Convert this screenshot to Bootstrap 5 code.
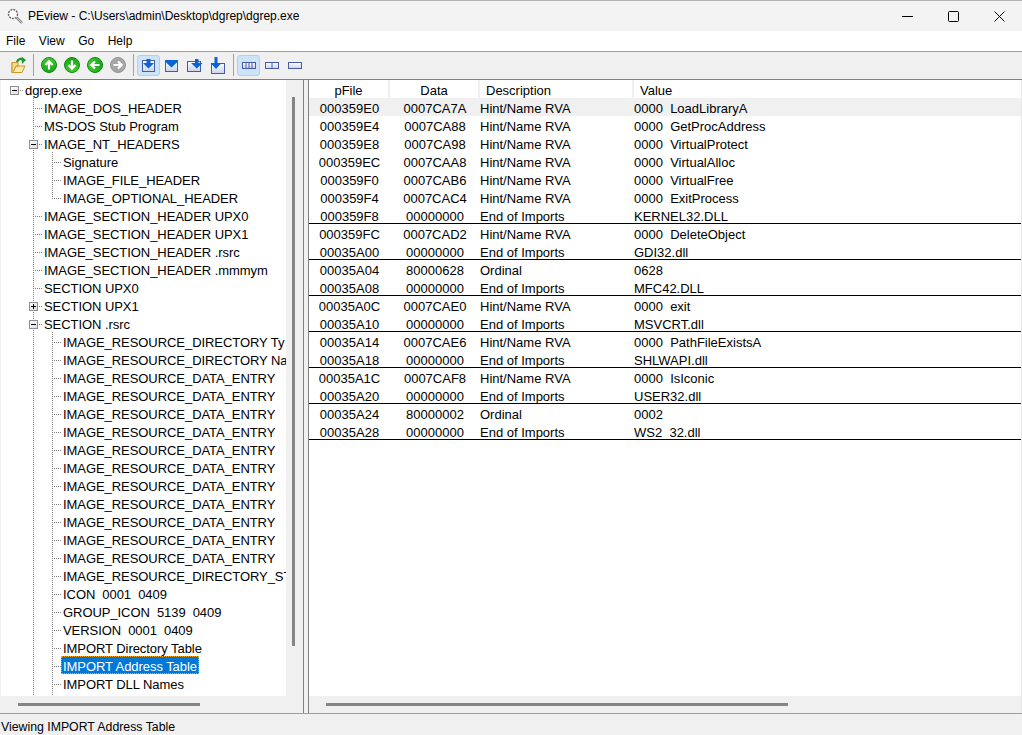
<!DOCTYPE html>
<html lang="en">
<head>
  <meta charset="UTF-8" />
  <title>PEview</title>
  <link rel="stylesheet" href="https://cdn.jsdelivr.net/npm/bootstrap@5.3.0/dist/css/bootstrap.min.css"/>
  <style>
    html, body { height: 100%; overflow: hidden; }
    body {
      background: #f0f0f0;
      color: #000;
      font-family: "Liberation Sans", Arial, sans-serif;
      font-size: 12px;
      line-height: 18px;
    }
    .app-win { height: 735px; border-top: 1px solid #b4b4b4; }
    .title-bar { height: 30px; background: #f3f3f3; padding-left: 7px; }
    .title-text { margin-left: 4px; }
    .win-btn { width: 46px; height: 30px; }
    .menu-bar { height: 20px; background: #fff; padding-left: 6px; gap: 13.5px; }
    .tool-bar { height: 28px; border-top: 1px solid #a0a0a0; border-bottom: 1px solid #808080; background: #f0f0f0; padding-left: 6px; box-sizing: content-box; }
    .tool-btn { width: 23px; height: 21px; border: 1px solid transparent; border-radius: 3px; }
    .tool-btn.on { background: #cce4f7; border-color: #a8d4f5; }
    .tool-sep { width: 8px; height: 22px; }
    .tool-sep::after { content: ""; display: block; width: 1px; height: 100%; margin-left: 4px; background: #a0a0a0; }
    .panes { height: 634px; font-size: 13px; border-bottom: 1px solid #a0a0a0; }
    .left-pane { width: 304px; border-right: 1px solid #808080; }
    .split-bar { width: 4px; }
    .right-pane { flex: 1; min-width: 0; border-left: 1px solid #808080; border-right: 1px solid #e8e8e8; }
    .tree-box { width: 285px; margin-left: 1px; background: #fff; overflow: hidden; white-space: nowrap; }
    .v-gutter { width: 17px; padding-top: 17px; }
    .v-thumb { width: 3px; height: 549px; margin-left: 6px; background: #858585; }
    .h-gutter { height: 17px; }
    .h-thumb { height: 3px; background: #858585; }
    .left-pane .h-thumb { width: 182px; margin-left: 18px; }
    .right-pane .h-thumb { width: 462px; margin-left: 17px; }
    .tree-row { height: 18px; padding-left: 3px; }
    .tree-cell { width: 19px; height: 18px; position: relative; flex: none; }
    .line-v::before, .line-up::before, .line-h::after { content: ""; position: absolute; }
    .line-v::before { left: 10px; top: 0; width: 1px; height: 18px; background: repeating-linear-gradient(to bottom, #808080 0 1px, transparent 1px 2px); }
    .line-up::before { left: 10px; top: 0; width: 1px; height: 11px; background: repeating-linear-gradient(to bottom, #808080 0 1px, transparent 1px 2px); }
    .line-h::after { left: 10px; top: 10px; width: 9px; height: 1px; background: repeating-linear-gradient(to right, #808080 0 1px, transparent 1px 2px); }
    .tree-exp { position: absolute; z-index: 1; left: 6px; top: 6px; width: 9px; height: 9px; border: 1px solid #8f8f8f; background: linear-gradient(135deg, #fff, #dcdcdc); }
    .tree-exp::before { content: ""; position: absolute; left: 1px; top: 3px; width: 5px; height: 1px; background: #000; }
    .tree-exp.shut::after { content: ""; position: absolute; left: 3px; top: 1px; width: 1px; height: 5px; background: #000; }
    .tree-label { padding: 4px 0 0 2px; line-height: 14px; height: 18px; white-space: pre; letter-spacing: -0.06px; }
    .tree-label.picked { padding-right: 2px; background: #0078d7; color: #fff; outline: 1px dotted #f5a623; outline-offset: -1px; }
    .data-box { background: #fff; overflow: hidden; }
    .pe-table { width: 100%; table-layout: fixed; border-collapse: separate; border-spacing: 0; margin: 0; }
    .pe-table th, .pe-table td { height: 18px; padding: 4px 0 0; line-height: 14px; font-weight: 400; white-space: pre; }
    .pe-table th { border-right: 2px solid #f0f0f0; }
    .pe-table th:last-child { border-right: 0; }
    .pe-table th.text-start { padding-left: 6px; }
    .pe-table .first-row td { background: #f0f0f0; }
    .pe-table .group-end td { box-shadow: inset 0 -1px 0 #000; }
    .col-pfile { width: 81px; }
    .col-data { width: 90px; }
    .col-desc { width: 154px; }
    .status-bar { height: 21px; padding-left: 1px; padding-top: 4px; font-size: 12.3px; }
  </style>
</head>
<body>
  <svg width="0" height="0" class="position-absolute">
    <defs>
      <linearGradient id="greenFill" x1="0" y1="0" x2="0" y2="1">
        <stop offset="0" stop-color="#4cc832"/><stop offset="1" stop-color="#18a51a"/>
      </linearGradient>
      <linearGradient id="paneFill" x1="0" y1="0" x2="0" y2="1">
        <stop offset="0" stop-color="#ffffff"/><stop offset="1" stop-color="#c8d2ec"/>
      </linearGradient>
      <symbol id="arrowBall" viewBox="0 0 16 16">
        <circle cx="8" cy="8" r="7.5" fill="url(#greenFill)" stroke="#0b8a10"/>
        <path d="M8 12.500V4.500M4.500 8 8 4.300 11.500 8" fill="none" stroke="#fff" stroke-width="2.200"/>
      </symbol>
      <symbol id="greyBall" viewBox="0 0 16 16">
        <circle cx="8" cy="8" r="7.500" fill="#a6a6a6" stroke="#969696"/>
        <path d="M3.500 8h8M8 4.500 11.700 8 8 11.500" fill="none" stroke="#fff" stroke-width="2.200"/>
      </symbol>
    </defs>
  </svg>

  <div class="app-win d-flex flex-column">
    <div class="title-bar d-flex align-items-center">
      <svg width="17" height="17" viewBox="0 0 17 17">
        <circle cx="6" cy="6" r="4.500" fill="#fff" stroke="#666" stroke-width="1.400" stroke-dasharray="2 1"/>
        <path d="M9.500 9.500 15 15" stroke="#777" stroke-width="2.400"/>
        <path d="M9.500 9.500 15 15" stroke="#eee" stroke-width="0.800"/>
      </svg>
      <span class="title-text flex-grow-1">PEview - C:\Users\admin\Desktop\dgrep\dgrep.exe</span>
      <div class="d-flex">
        <div class="win-btn d-flex align-items-center justify-content-center">
          <svg width="11" height="11" viewBox="0 0 11 11"><path d="M0 5.500h11" stroke="#000"/></svg>
        </div>
        <div class="win-btn d-flex align-items-center justify-content-center">
          <svg width="11" height="11" viewBox="0 0 11 11"><rect x=".5" y=".5" width="10" height="10" rx="1" fill="none" stroke="#000"/></svg>
        </div>
        <div class="win-btn d-flex align-items-center justify-content-center">
          <svg width="11" height="11" viewBox="0 0 11 11"><path d="M.5.5l10 10M10.500.5l-10 10" stroke="#000"/></svg>
        </div>
      </div>
    </div>

    <div class="menu-bar d-flex align-items-center">
      <span>File</span><span>View</span><span>Go</span><span>Help</span>
    </div>

    <div class="tool-bar d-flex align-items-center">
      <div class="tool-btn d-flex align-items-center justify-content-center">
        <svg width="18" height="18" viewBox="0 0 18 18">
          <path d="M3 6.500V16.500H13L16 10H7L4.500 15" fill="#fdeaa6" stroke="#c9962f"/>
          <path d="M3 16.500V6.500H9V10H7L4.500 15Z" fill="#fbdc82" stroke="#c9962f"/>
          <path d="M8 6C9 3 12 2 14 4" fill="none" stroke="#1f9a2a" stroke-width="2.200"/>
          <path d="M12.500 .5 17 4 13 8Z" fill="#1f9a2a"/>
        </svg>
      </div>
      <div class="tool-sep"></div>
      <div class="tool-btn d-flex align-items-center justify-content-center"><svg width="16" height="16"><use href="#arrowBall"/></svg></div>
      <div class="tool-btn d-flex align-items-center justify-content-center"><svg width="16" height="16"><use href="#arrowBall" transform="rotate(180 8 8)"/></svg></div>
      <div class="tool-btn d-flex align-items-center justify-content-center"><svg width="16" height="16"><use href="#arrowBall" transform="rotate(-90 8 8)"/></svg></div>
      <div class="tool-btn d-flex align-items-center justify-content-center"><svg width="16" height="16"><use href="#greyBall"/></svg></div>
      <div class="tool-sep"></div>
      <div class="tool-btn on d-flex align-items-center justify-content-center">
        <svg width="15" height="15" viewBox="0 0 15 15">
          <rect x="1.500" y="2.500" width="12" height="11" fill="url(#paneFill)" stroke="#4a5ba5"/>
          <path d="M5.500 1h4v4H13L7.500 10.500 2 5H5.500Z" fill="#0a64d8"/>
        </svg>
      </div>
      <div class="tool-btn d-flex align-items-center justify-content-center">
        <svg width="15" height="15" viewBox="0 0 15 15">
          <rect x="1.500" y="2.500" width="12" height="11" fill="url(#paneFill)" stroke="#4a5ba5"/>
          <path d="M1 2H14V3.500L7.500 9.500 1 3.500Z" fill="#0a64d8"/>
        </svg>
      </div>
      <div class="tool-btn d-flex align-items-center justify-content-center">
        <svg width="16" height="15" viewBox="0 0 16 15">
          <rect x=".5" y="3.500" width="13" height="10" fill="url(#paneFill)" stroke="#4a5ba5"/>
          <path d="M8 1h3.500v4H15.500L9.750 10.500 4 5H8Z" fill="#0a64d8"/>
        </svg>
      </div>
      <div class="tool-btn d-flex align-items-center justify-content-center">
        <svg width="15" height="17" viewBox="0 0 15 17">
          <rect x="1.500" y="6.500" width="13" height="10" fill="url(#paneFill)" stroke="#4a5ba5"/>
          <path d="M4.500 0h3v6H11.500L6 12 .5 6H4.500Z" fill="#0a64d8"/>
        </svg>
      </div>
      <div class="tool-sep"></div>
      <div class="tool-btn on d-flex align-items-center justify-content-center">
        <svg width="14" height="7" viewBox="0 0 14 7">
          <rect x=".5" y=".5" width="13" height="6" fill="url(#paneFill)" stroke="#4a5ba5"/>
          <path d="M4 .5v6M7 .5v6M10 .5v6" stroke="#4a5ba5"/>
        </svg>
      </div>
      <div class="tool-btn d-flex align-items-center justify-content-center">
        <svg width="14" height="7" viewBox="0 0 14 7">
          <rect x=".5" y=".5" width="13" height="6" fill="url(#paneFill)" stroke="#4a5ba5"/>
          <path d="M7 .5v6" stroke="#4a5ba5"/>
        </svg>
      </div>
      <div class="tool-btn d-flex align-items-center justify-content-center">
        <svg width="14" height="7" viewBox="0 0 14 7">
          <rect x=".5" y=".5" width="13" height="6" fill="url(#paneFill)" stroke="#4a5ba5"/>
        </svg>
      </div>
    </div>

    <div class="panes d-flex">
      <div class="left-pane d-flex flex-column">
        <div class="d-flex flex-grow-1 overflow-hidden">
          <div class="tree-box" id="treeBox"></div>
          <div class="v-gutter"><div class="v-thumb"></div></div>
        </div>
        <div class="h-gutter d-flex align-items-center"><div class="h-thumb"></div></div>
      </div>
      <div class="split-bar"></div>
      <div class="right-pane d-flex flex-column">
        <div class="data-box flex-grow-1">
          <table class="pe-table">
            <thead>
              <tr>
                <th class="col-pfile text-center">pFile</th>
                <th class="col-data text-center">Data</th>
                <th class="col-desc text-start">Description</th>
                <th class="text-start">Value</th>
              </tr>
            </thead>
            <tbody id="rowsBody"></tbody>
          </table>
        </div>
        <div class="h-gutter d-flex align-items-center"><div class="h-thumb"></div></div>
      </div>
    </div>

    <div class="status-bar d-flex align-items-center">Viewing IMPORT Address Table</div>
  </div>

  <script>
    // cells: v = guide, t = tee, l = elbow, m = open box, p = closed box, _ = empty
    const tree = [
      ["m", "dgrep.exe"],
      ["_t", "IMAGE_DOS_HEADER"],
      ["_t", "MS-DOS Stub Program"],
      ["_m", "IMAGE_NT_HEADERS"],
      ["_vt", "Signature"],
      ["_vt", "IMAGE_FILE_HEADER"],
      ["_vl", "IMAGE_OPTIONAL_HEADER"],
      ["_t", "IMAGE_SECTION_HEADER UPX0"],
      ["_t", "IMAGE_SECTION_HEADER UPX1"],
      ["_t", "IMAGE_SECTION_HEADER .rsrc"],
      ["_t", "IMAGE_SECTION_HEADER .mmmym"],
      ["_t", "SECTION UPX0"],
      ["_p", "SECTION UPX1"],
      ["_m", "SECTION .rsrc"],
      ["_vt", "IMAGE_RESOURCE_DIRECTORY Ty"],
      ["_vt", "IMAGE_RESOURCE_DIRECTORY Na"],
      ...Array(11).fill(["_vt", "IMAGE_RESOURCE_DATA_ENTRY"]),
      ["_vt", "IMAGE_RESOURCE_DIRECTORY_ST"],
      ["_vt", "ICON  0001  0409"],
      ["_vt", "GROUP_ICON  5139  0409"],
      ["_vt", "VERSION  0001  0409"],
      ["_vt", "IMPORT Directory Table"],
      ["_vt", "IMPORT Address Table", true],
      ["_vt", "IMPORT DLL Names"],
      ["_vt", ""]
    ];

    const cellHtml = {
      _: '<span class="tree-cell"></span>',
      v: '<span class="tree-cell line-v"></span>',
      t: '<span class="tree-cell line-v line-h"></span>',
      l: '<span class="tree-cell line-up line-h"></span>',
      m: '<span class="tree-cell line-v line-h"><span class="tree-exp"></span></span>',
      p: '<span class="tree-cell line-v line-h"><span class="tree-exp shut"></span></span>'
    };

    document.getElementById("treeBox").innerHTML = tree.map(([cells, label, picked], i) => {
      let html = [...cells].map(c => cellHtml[c]).join("");
      if (i === 0) html = '<span class="tree-cell line-h"><span class="tree-exp"></span></span>';
      return `<div class="tree-row d-flex"><div class="d-flex">${html}</div>` +
        `<span class="tree-label${picked ? " picked" : ""}">${label}</span></div>`;
    }).join("");

    const rows = [
      ["000359E0", "0007CA7A", "Hint/Name RVA", "0000  LoadLibraryA"],
      ["000359E4", "0007CA88", "Hint/Name RVA", "0000  GetProcAddress"],
      ["000359E8", "0007CA98", "Hint/Name RVA", "0000  VirtualProtect"],
      ["000359EC", "0007CAA8", "Hint/Name RVA", "0000  VirtualAlloc"],
      ["000359F0", "0007CAB6", "Hint/Name RVA", "0000  VirtualFree"],
      ["000359F4", "0007CAC4", "Hint/Name RVA", "0000  ExitProcess"],
      ["000359F8", "00000000", "End of Imports", "KERNEL32.DLL", 1],
      ["000359FC", "0007CAD2", "Hint/Name RVA", "0000  DeleteObject"],
      ["00035A00", "00000000", "End of Imports", "GDI32.dll", 1],
      ["00035A04", "80000628", "Ordinal", "0628"],
      ["00035A08", "00000000", "End of Imports", "MFC42.DLL", 1],
      ["00035A0C", "0007CAE0", "Hint/Name RVA", "0000  exit"],
      ["00035A10", "00000000", "End of Imports", "MSVCRT.dll", 1],
      ["00035A14", "0007CAE6", "Hint/Name RVA", "0000  PathFileExistsA"],
      ["00035A18", "00000000", "End of Imports", "SHLWAPI.dll", 1],
      ["00035A1C", "0007CAF8", "Hint/Name RVA", "0000  IsIconic"],
      ["00035A20", "00000000", "End of Imports", "USER32.dll", 1],
      ["00035A24", "80000002", "Ordinal", "0002"],
      ["00035A28", "00000000", "End of Imports", "WS2_32.dll", 1]
    ];

    document.getElementById("rowsBody").innerHTML = rows.map((r, i) => {
      const cls = [i === 0 ? "first-row" : "", r[4] ? "group-end" : ""].join(" ");
      return `<tr class="${cls}"><td class="text-center">${r[0]}</td><td class="text-center">${r[1]}</td><td>${r[2]}</td><td>${r[3]}</td></tr>`;
    }).join("");
  </script>
  <script src="https://cdn.jsdelivr.net/npm/bootstrap@5.3.0/dist/js/bootstrap.bundle.min.js"></script>
</body>
</html>
